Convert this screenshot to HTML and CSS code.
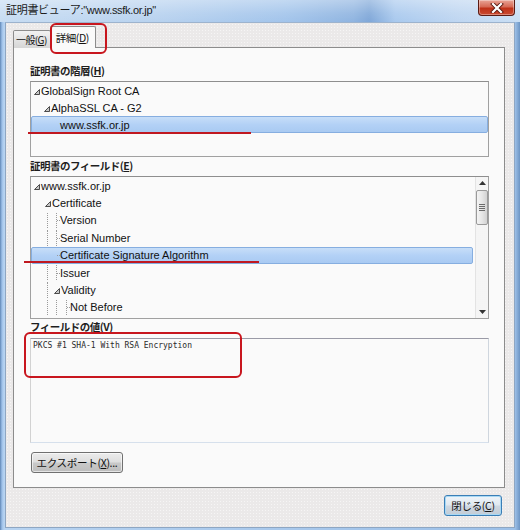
FILE: index.html
```html
<!DOCTYPE html>
<html lang="ja">
<head>
<meta charset="utf-8">
<link rel="stylesheet" href="styles.css">
</head>
<body>
<div class="window">
  <div class="titlebar">
    <span class="title">証明書ビューア:"www.ssfk.or.jp"</span>
    <span class="closex"><svg width="14" height="10" viewBox="0 0 14 10"><path d="M3 1 L11 9 M11 1 L3 9" stroke="#5a1a12" stroke-width="4" stroke-linecap="square"/><path d="M3 1 L11 9 M11 1 L3 9" stroke="#fff" stroke-width="2.2" stroke-linecap="square"/></svg></span>
  </div>
  <div class="client">
    <div class="tabs">
      <div class="tab">一般(<u>G</u>)</div>
      <div class="tab sel">詳細(<u>D</u>)</div>
    </div>
    <div class="panel">
      <div class="label">証明書の階層(<u>H</u>)</div>
      <div class="box tree1">
        <div class="row"><span class="sp" style="width:2px"></span><span class="tri"><svg width="6" height="6" viewBox="0 0 6 6"><path d="M5.5 0.5 L5.5 5.5 L0.5 5.5 Z" fill="#c8c8c8" stroke="#3a3a3a" stroke-width="0.9"/></svg></span><span class="txt">GlobalSign Root CA</span></div>
        <div class="row"><span class="sp" style="width:12px"></span><span class="tri"><svg width="6" height="6" viewBox="0 0 6 6"><path d="M5.5 0.5 L5.5 5.5 L0.5 5.5 Z" fill="#c8c8c8" stroke="#3a3a3a" stroke-width="0.9"/></svg></span><span class="txt">AlphaSSL CA - G2</span></div>
        <div class="row selrow"><span class="sp" style="width:28px"></span><span class="txt">www.ssfk.or.jp</span></div>
      </div>
      <div class="label">証明書のフィールド(<u>E</u>)</div>
      <div class="box tree2">
        <div class="rows">
          <div class="row r2"><span class="sp" style="width:2px"></span><span class="tri"><svg width="6" height="6" viewBox="0 0 6 6"><path d="M5.5 0.5 L5.5 5.5 L0.5 5.5 Z" fill="#c8c8c8" stroke="#3a3a3a" stroke-width="0.9"/></svg></span><span class="txt">www.ssfk.or.jp</span></div>
          <div class="row r2"><span class="sp" style="width:13px"></span><span class="tri"><svg width="6" height="6" viewBox="0 0 6 6"><path d="M5.5 0.5 L5.5 5.5 L0.5 5.5 Z" fill="#c8c8c8" stroke="#3a3a3a" stroke-width="0.9"/></svg></span><span class="txt">Certificate</span></div>
          <div class="row r2"><span class="sp" style="width:15px"></span><span class="g" style="width:9px"></span><span class="g stub" style="width:4px"></span><span class="txt">Version</span></div>
          <div class="row r2"><span class="sp" style="width:15px"></span><span class="g" style="width:9px"></span><span class="g stub" style="width:4px"></span><span class="txt">Serial Number</span></div>
          <div class="row r2 selrow2"><span class="sp" style="width:24px"></span><span class="g stub nol" style="width:4px"></span><span class="txt">Certificate Signature Algorithm</span></div>
          <div class="row r2"><span class="sp" style="width:15px"></span><span class="g" style="width:9px"></span><span class="g stub" style="width:4px"></span><span class="txt">Issuer</span></div>
          <div class="row r2"><span class="sp" style="width:15px"></span><span class="g" style="width:7px"></span><span class="tri"><svg width="6" height="6" viewBox="0 0 6 6"><path d="M5.5 0.5 L5.5 5.5 L0.5 5.5 Z" fill="#c8c8c8" stroke="#3a3a3a" stroke-width="0.9"/></svg></span><span class="txt">Validity</span></div>
          <div class="row r2"><span class="sp" style="width:15px"></span><span class="g" style="width:9px"></span><span class="g" style="width:10px"></span><span class="g stub" style="width:4px"></span><span class="txt">Not Before</span></div>
        </div>
        <div class="scrollbar">
          <div class="arrow"><svg width="7" height="4" viewBox="0 0 7 4"><path d="M0 4 L3.5 0 L7 4 Z" fill="#333"/></svg></div>
          <div class="thumb"><span></span><span></span><span></span><span></span></div>
          <div class="track"></div>
          <div class="arrow"><svg width="7" height="4" viewBox="0 0 7 4"><path d="M0 0 L3.5 4 L7 0 Z" fill="#333"/></svg></div>
        </div>
      </div>
      <div class="label lab3">フィールドの値(<u>V</u>)</div>
      <div class="box value">PKCS #1 SHA-1 With RSA Encryption</div>
      <div class="btnrow">
        <div class="btn export">エクスポート(<u>X</u>)...</div>
      </div>
    </div>
    <div class="footer">
      <div class="btn close">閉じる(<u>C</u>)</div>
    </div>
  </div>
  <div class="mark m-tab"></div>
  <div class="mark m-line1"></div>
  <div class="mark m-line2"></div>
  <div class="mark m-value"></div>
</div>
</body>
</html>
```

FILE: styles.css
```css
* { box-sizing: border-box; }
html, body { margin: 0; padding: 0; }
body { background: #fff; }

.window {
  position: relative;
  width: 520px;
  height: 530px;
  display: flex;
  flex-direction: column;
  background: linear-gradient(90deg, #5f86b5 0, #9dc0e8 2px, #b7d3f1 4px, #9dc0e8 515px, #6d95c4 520px);
  font-family: "Noto Sans CJK JP", "Liberation Sans", sans-serif;
  color: #000;
}

.titlebar {
  position: relative;
  height: 22px;
  flex: none;
  background:
    linear-gradient(180deg, rgba(255,255,255,0.35) 0, rgba(255,255,255,0.1) 60%, rgba(255,255,255,0) 100%),
    linear-gradient(90deg, #c7dcf2 0, #b8d2ef 30%, #a2c4eb 55%, #8fb4e0 68%, #7fa7d8 71%, #a9c9ee 76%, #bfd6f1 88%, #c9def4 100%);
  display: flex;
  align-items: center;
}
.title {
  padding-left: 6px;
  font-size: 11px;
  line-height: 14px;
  margin-top: -3px;
  font-family: "Liberation Sans", "Noto Sans CJK JP", sans-serif;
  letter-spacing: -0.3px;
  color: #1a1a1a;
}
.closex {
  position: absolute;
  right: 5px;
  top: 0;
  width: 37px;
  height: 16px;
  border: 1px solid #5b1b14;
  border-top: none;
  border-radius: 0 0 4px 4px;
  background: linear-gradient(180deg, #e9a597 0, #d66a56 45%, #bf3219 55%, #c94a31 100%);
  display: flex;
  align-items: center;
  justify-content: center;
  box-shadow: inset 0 0 0 1px rgba(255,255,255,0.35);
}
.closex svg { display: block; }

.client {
  flex: 1;
  margin: 0 5px 2px 5px;
  border: 1px solid #8ea6c2;
  border-top-color: #9db3cd;
  background-color: #ebe9e9;
  background-image: radial-gradient(#f6f5f5 0.6px, transparent 0.9px);
  background-size: 3px 3px;
  padding: 3px 9px 0 7px;
  display: flex;
  flex-direction: column;
}

.tabs {
  display: flex;
  align-items: flex-end;
  height: 22px;
  position: relative;
  z-index: 2;
  margin-bottom: -1px;
}
.tab {
  height: 18px;
  padding: 0 3px 0 2px;
  border: 1px solid #8c8c8c;
  border-bottom: none;
  border-radius: 2px 2px 0 0;
  background: linear-gradient(180deg, #f2f2f2 0, #e4e4e4 50%, #d6d6d6 100%);
  font-size: 10px;
  line-height: 17px;
  letter-spacing: -0.6px;
  white-space: nowrap;
  color: #111;
}
.tab.sel {
  height: 22px;
  margin-left: -1px;
  padding: 0 6px 0 5px;
  background: #fafafa;
  line-height: 21px;
  font-size: 10.5px;
  letter-spacing: -0.4px;
  border-color: #8c8c8c;
}

.panel {
  height: 441px;
  flex: none;
  background: #fafafa;
  border: 1px solid #8c8c8c;
  padding: 15px 15px 0 16px;
  display: flex;
  flex-direction: column;
}

.label {
  font-size: 10.5px;
  font-weight: bold;
  line-height: 16px;
  height: 16px;
  letter-spacing: -0.5px;
  color: #1e1e1e;
  margin-bottom: 2px;
}
.label u { text-decoration: underline; }

.box {
  border: 1px solid #a0a0a0;
  border-top-color: #8e8e8e;
  background: #fafafa;
}

.tree1 {
  height: 76px;
  padding-top: 0;
  margin-bottom: 1px;
}
.row {
  display: flex;
  align-items: center;
  height: 17px;
  font-family: "Liberation Sans", sans-serif;
  font-size: 11px;
  color: #111;
  white-space: nowrap;
  border: 1px solid transparent;
}
.row .sp { flex: none; height: 100%; }
.row .tri { flex: none; width: 7px; display: flex; align-items: center; }
.row .tri svg { display: block; margin-top: 2px; }
.row .txt { padding-left: 0; }
.selrow, .selrow2 {
  background: linear-gradient(180deg, #c7def8 0, #b3d1f6 50%, #a9caf2 100%);
  border: 1px solid #86aee0;
  border-radius: 2px;
}

.tree2 {
  height: 143px;
  display: flex;
  margin-bottom: 0;
}
.rows {
  flex: 1;
  padding-right: 2px;
  overflow: hidden;
}
.r2 { height: 17.4px; }
.g {
  flex: none;
  align-self: stretch;
  border-left: 1px dotted #9a9a9a;
  position: relative;
}
.g.stub::after {
  content: "";
  position: absolute;
  left: 0;
  right: 0;
  top: 50%;
  border-top: 1px dotted #9a9a9a;
}
.g.nol { border-left-color: transparent; }

.scrollbar {
  width: 13px;
  flex: none;
  display: flex;
  flex-direction: column;
  background-color: #ebebeb;
  background-image: radial-gradient(#fafafa 0.6px, transparent 0.9px);
  background-size: 2px 2px;
  border-left: 1px solid #e3e3e3;
}
.arrow {
  height: 12px;
  display: flex;
  align-items: center;
  justify-content: center;
}
.arrow svg { display: block; }
.thumb {
  height: 35px;
  margin: 1px 0 0 0;
  border: 1px solid #9a9a9a;
  border-radius: 2px;
  background: linear-gradient(90deg, #f4f4f4 0, #e6e6e6 50%, #d2d2d2 100%);
  display: flex;
  flex-direction: column;
  align-items: center;
  justify-content: center;
  gap: 1px;
}
.thumb span {
  width: 6px;
  height: 1px;
  background: #6a6a6a;
}
.track { flex: 1; }

.lab3 {
  margin-top: 0;
  margin-bottom: 3px;
}
.value {
  height: 105px;
  border-color: #cfd6de;
  border-top: 1px solid #9a9aa6;
  border-left: 1px solid #d2d2d2;
  border-bottom-color: #d6e0ec;
  padding: 1px 0 0 2px;
  font-family: "DejaVu Sans Mono", "Liberation Mono", monospace;
  font-size: 8px;
  line-height: 12px;
  color: #2a2a2a;
  letter-spacing: 0;
}

.btnrow {
  margin-top: 9px;
  display: flex;
}
.btn {
  height: 21px;
  border: 1px solid #707070;
  border-radius: 3px;
  font-size: 10.5px;
  line-height: 19px;
  text-align: center;
  letter-spacing: -0.3px;
  color: #111;
  white-space: nowrap;
  box-shadow: inset 0 0 0 1px rgba(255,255,255,0.6);
}
.export {
  width: 92px;
  margin-left: 1px;
  background: linear-gradient(180deg, #ececec 0, #dedede 48%, #c9c9c9 52%, #bdbdbd 100%);
}

.footer {
  display: flex;
  justify-content: flex-end;
  padding: 7px 3px 0 0;
}
.close {
  width: 58px;
  border-color: #3a7eb6;
  background: linear-gradient(180deg, #eef4f9 0, #e0e8f0 48%, #cfd8e2 52%, #c2ccd6 100%);
  box-shadow: inset 0 0 0 1px #a8d8f4;
}

.mark {
  position: absolute;
  pointer-events: none;
}
.m-tab {
  left: 50px;
  top: 23px;
  width: 57px;
  height: 31px;
  border: 2px solid #c8161e;
  border-radius: 6px;
  z-index: 5;
}
.m-line1 {
  left: 28px;
  top: 132px;
  width: 223px;
  height: 2px;
  background: #c01820;
}
.m-line2 {
  left: 24px;
  top: 261px;
  width: 235px;
  height: 2px;
  background: #c01820;
}
.m-value {
  left: 24px;
  top: 332px;
  width: 218px;
  height: 46px;
  border: 2px solid #c8161e;
  border-radius: 6px;
}
```
